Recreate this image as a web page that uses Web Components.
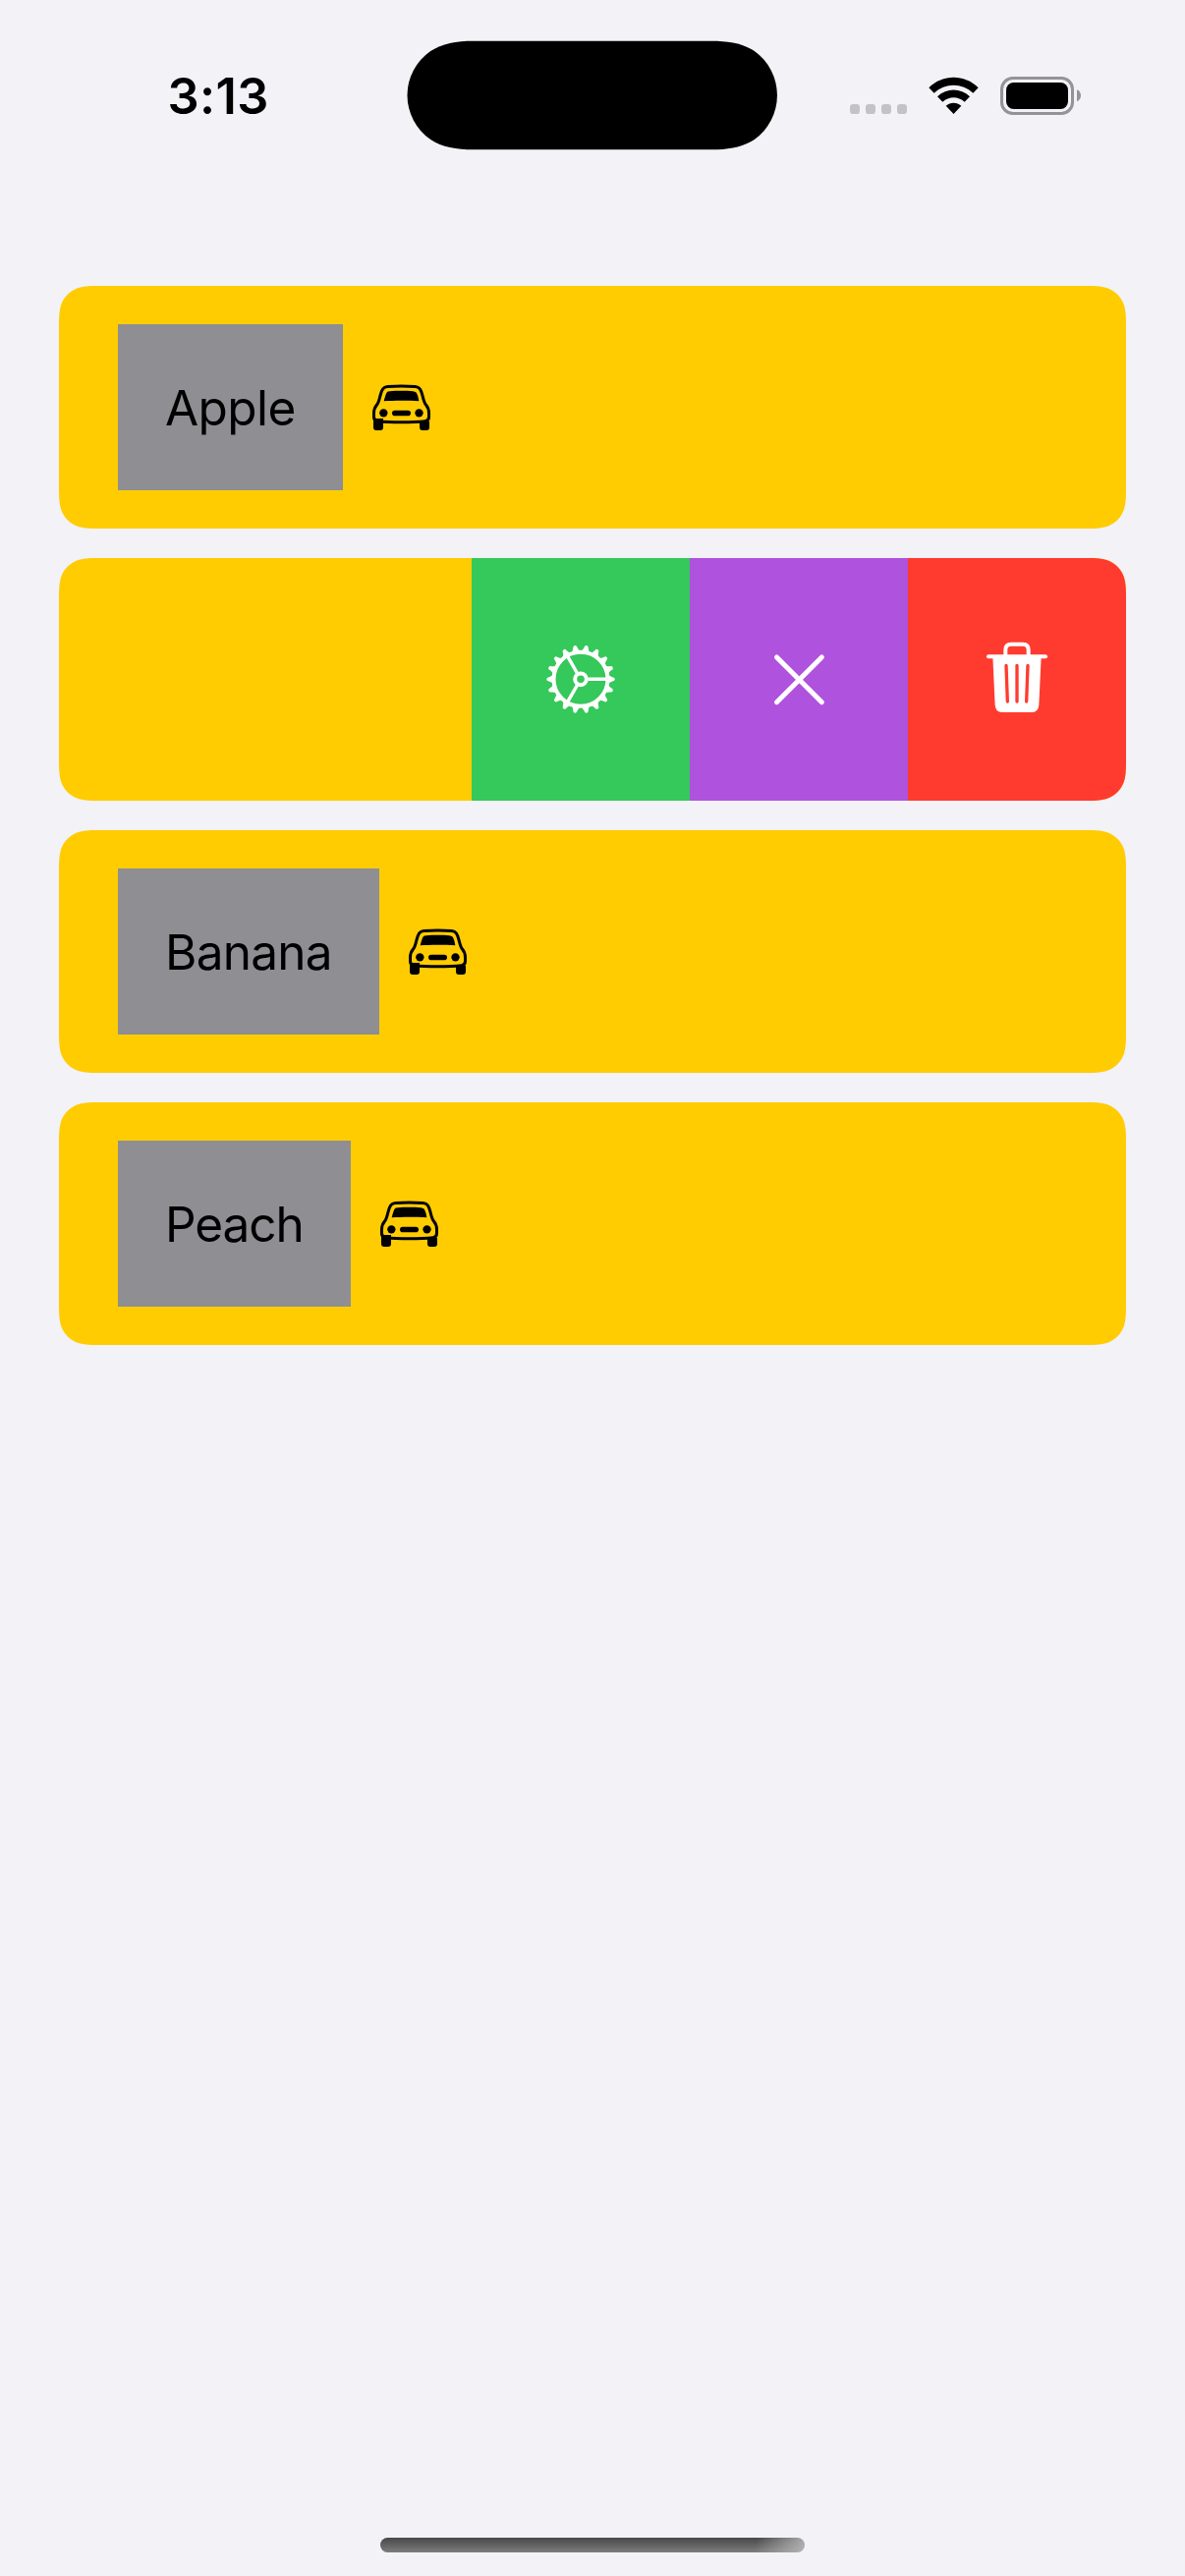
<!DOCTYPE html>
<html lang="en">
<head>
<meta charset="utf-8">
<title>Swipe actions</title>
<style>
html,body{margin:0;background:#f2f2f7}
body{width:1206px;height:2622px;overflow:hidden;font-family:Inter,"Liberation Sans",sans-serif;color:#000}
</style>
</head>
<body>
<phone-screen>
  <status-bar slot="top">3:13</status-bar>
  <list-card><fruit-tag style="--w:229px;--track:-0.55px">Apple</fruit-tag><car-icon></car-icon></list-card>
  <list-card swiped>
    <swipe-action style="--tint:#35c85a"><gear-icon></gear-icon></swipe-action>
    <swipe-action style="--tint:#af52de"><cross-icon></cross-icon></swipe-action>
    <swipe-action style="--tint:#ff3b2f"><trash-icon></trash-icon></swipe-action>
  </list-card>
  <list-card><fruit-tag style="--w:266px;--track:-0.75px">Banana</fruit-tag><car-icon></car-icon></list-card>
  <list-card><fruit-tag style="--w:237px;--track:-1.05px">Peach</fruit-tag><car-icon></car-icon></list-card>
  <home-indicator slot="bottom"></home-indicator>
</phone-screen>
<script>
const define = (name, html) => customElements.define(name, class extends HTMLElement {
  constructor() {
    super();
    this.attachShadow({ mode: 'open' }).innerHTML = html;
  }
});

define('phone-screen', `
<style>
:host{display:flex;flex-direction:column;width:1206px;height:2622px;background:#f2f2f7}
main{flex:1;display:flex;flex-direction:column;gap:30px;padding:0 60px}
</style>
<slot name="top"></slot><main><slot></slot></main><slot name="bottom"></slot>`);

define('status-bar', `
<style>
:host{display:flex;align-items:flex-start;height:291px}
.time{width:243.500px;margin-left:170.500px;padding-top:68px;font-size:50.5px;line-height:60px;font-weight:600;letter-spacing:0.4px;white-space:nowrap}
.island{width:378px;height:112px;margin-top:41px}
.signals{width:260px;height:70px;margin:60px 0 0 58px}
svg{display:block;flex:none}
</style>
<div class="time"><slot></slot></div>
<svg class="island" viewBox="0 0 378 112"><path d="M.5 56A55.33 55.33 0 0 1 24.2 11C36 3.200 50 .67 68 .67H310C328 .67 342 3.200 353.800 11A55.33 55.33 0 0 1 353.800 101C342 108.800 328 111.330 310 111.330H68C50 111.330 36 108.800 24.200 101A55.33 55.33 0 0 1 .5 56Z"/></svg>
<svg class="signals" viewBox="0 0 780 210">
  <g fill="#c3c2c8"><rect x="45" y="138" width="30" height="30" rx="10"/><rect x="93" y="138" width="30" height="30" rx="10"/><rect x="141" y="138" width="30" height="30" rx="10"/><rect x="189" y="138" width="30" height="30" rx="10"/></g>
  <path d="M286 88C328 46 395 46 437 88L421 104C388 72 335 72 302 104Z"/>
  <path d="M312 115C340 88 383 88 411 115L395 131C376 113 347 113 328 131Z"/>
  <path d="M338 143C352 131 371 131 385 143L361.500 168Z"/>
  <rect x="508.500" y="58.500" width="216" height="108" rx="34" fill="none" stroke="#949398" stroke-width="9"/>
  <rect x="522" y="72" width="189" height="81" rx="23"/>
  <path d="M738 94C746 98 750 104 750 112S746 126 738 130Z" fill="#949398"/>
</svg>`);

/* Continuous-curvature corners, 30px nominal radius on a 1086x247 card. */
const corner = (() => {
  const w = 1086, h = 247, r = 30, a = 1.528665 * r, b = 1.088493 * r, c = .868407 * r,
    d = .631494 * r, e = .074911 * r, f = .372824 * r, g = .16906 * r;
  return `M${a} 0H${w-a}C${w-b} 0 ${w-c} 0 ${w-d} ${e}C${w-f} ${g} ${w-g} ${f} ${w-e} ${d}C${w} ${c} ${w} ${b} ${w} ${a}` +
    `V${h-a}C${w} ${h-b} ${w} ${h-c} ${w-e} ${h-d}C${w-g} ${h-f} ${w-f} ${h-g} ${w-d} ${h-e}C${w-c} ${h} ${w-b} ${h} ${w-a} ${h}` +
    `H${a}C${b} ${h} ${c} ${h} ${d} ${h-e}C${f} ${h-g} ${g} ${h-f} ${e} ${h-d}C0 ${h-c} 0 ${h-b} 0 ${h-a}` +
    `V${a}C0 ${b} 0 ${c} ${e} ${d}C${g} ${f} ${f} ${g} ${d} ${e}C${c} 0 ${b} 0 ${a} 0Z`;
})();

define('list-card', `
<style>
:host{display:flex;align-items:center;gap:30px;box-sizing:border-box;width:1086px;height:247px;padding-left:60px;background:#ffcc02;clip-path:path("${corner}")}
:host([swiped]){gap:0;padding:0;justify-content:flex-end}
</style><slot></slot>`);

define('fruit-tag', `
<style>
:host{display:flex;align-items:center;box-sizing:border-box;width:var(--w);height:169px;padding-left:48px;background:#8e8e93;font-size:49.5px;line-height:60px;letter-spacing:var(--track);white-space:nowrap}
</style><span><slot></slot></span>`);

define('swipe-action', `
<style>
:host{display:flex;align-items:center;justify-content:center;width:222px;height:247px;background:var(--tint);color:#fff}
</style><slot></slot>`);

const icon = (name, w, h, box, body) => define(name,
  `<style>:host{display:block;width:${w}px;height:${h}px}svg{display:block}</style><svg width="${w}" height="${h}" viewBox="${box}">${body}</svg>`);

icon('car-icon', 59, 47, '27 33 177 141', `
<path fill="none" stroke="#000" stroke-width="9" d="M31.500 122C31.500 110 34 104 40 97C46 90 48 80 51 68C56 49 60 42 73 40.500C95 39 136 39 158 40.500C171 42 175 49 180 68C183 80 185 90 191 97C197 104 199.500 110 199.500 122V133C199.500 142 196 145 188 146C150 150.500 81 150.500 43 146C35 145 31.500 142 31.500 133Z"/>
<path d="M62 85C66 70 68 62 72 57Q74 55 80 54.500C100 53 131 53 151 54.500Q157 55 160 58C165 64 167 72 169 85C140 82.500 91 82.500 62 85Z"/>
<circle cx="61" cy="121" r="12.500"/><circle cx="169.500" cy="121" r="12.500"/>
<rect x="87" y="113" width="57" height="17" rx="8.500"/>
<path d="M30 138H60V165Q60 174 51 174H39Q30 174 30 165ZM171 146H201V165Q201 174 192 174H180Q171 174 171 165Z"/>`);

const teeth = Array.from({ length: 18 }, (_, i) =>
  `<path transform="rotate(${i * 20})" d="M82 -12C90 -11 91 -8 97 -6.500Q104.500 -6 104.500 0Q104.500 6 97 6.500C91 8 90 11 82 12Z"/>`).join('');
icon('gear-icon', 71, 71, '-105 -106 213 213', `
<g fill="#fff">${teeth}</g>
<g fill="none" stroke="#fff"><circle r="82.500" stroke-width="12"/><circle r="17.500" stroke-width="12"/>
<path stroke-width="10.500" d="M22 0H80M-11 19L-40 69.300M-11 -19L-40 -69.300"/></g>`);

icon('cross-icon', 60, 60, '39 35.500 180 180', `
<path fill="none" stroke="#fff" stroke-width="15" stroke-linecap="round" d="M61.500 56.500L199 193.500M199 56.500L61.500 193.500"/>`);

icon('trash-icon', 68, 81, '33 33 204 243', `
<g fill="none" stroke="#fff" stroke-width="12" stroke-linecap="round"><path d="M48 85H222"/><path d="M100 82V64Q100 47 117 47H153Q170 47 170 64V82"/></g>
<path fill="#fff" d="M61 85L68 233Q70 255 91 255H179Q200 255 202 233L209 85Z"/>
<path fill="none" stroke="#ff3b2f" stroke-width="10" stroke-linecap="round" d="M102 112L106 222M135 112V222M168 112L164 222"/>`);

define('home-indicator', `
<style>
:host{display:flex;justify-content:center;height:39px}
div{width:432px;height:15px;border-radius:8px;background:linear-gradient(105deg,transparent 88%,#b8b8b8 101%),linear-gradient(#484848,#7c7c7c)}
</style><div></div>`);
</script>
</body>
</html>
